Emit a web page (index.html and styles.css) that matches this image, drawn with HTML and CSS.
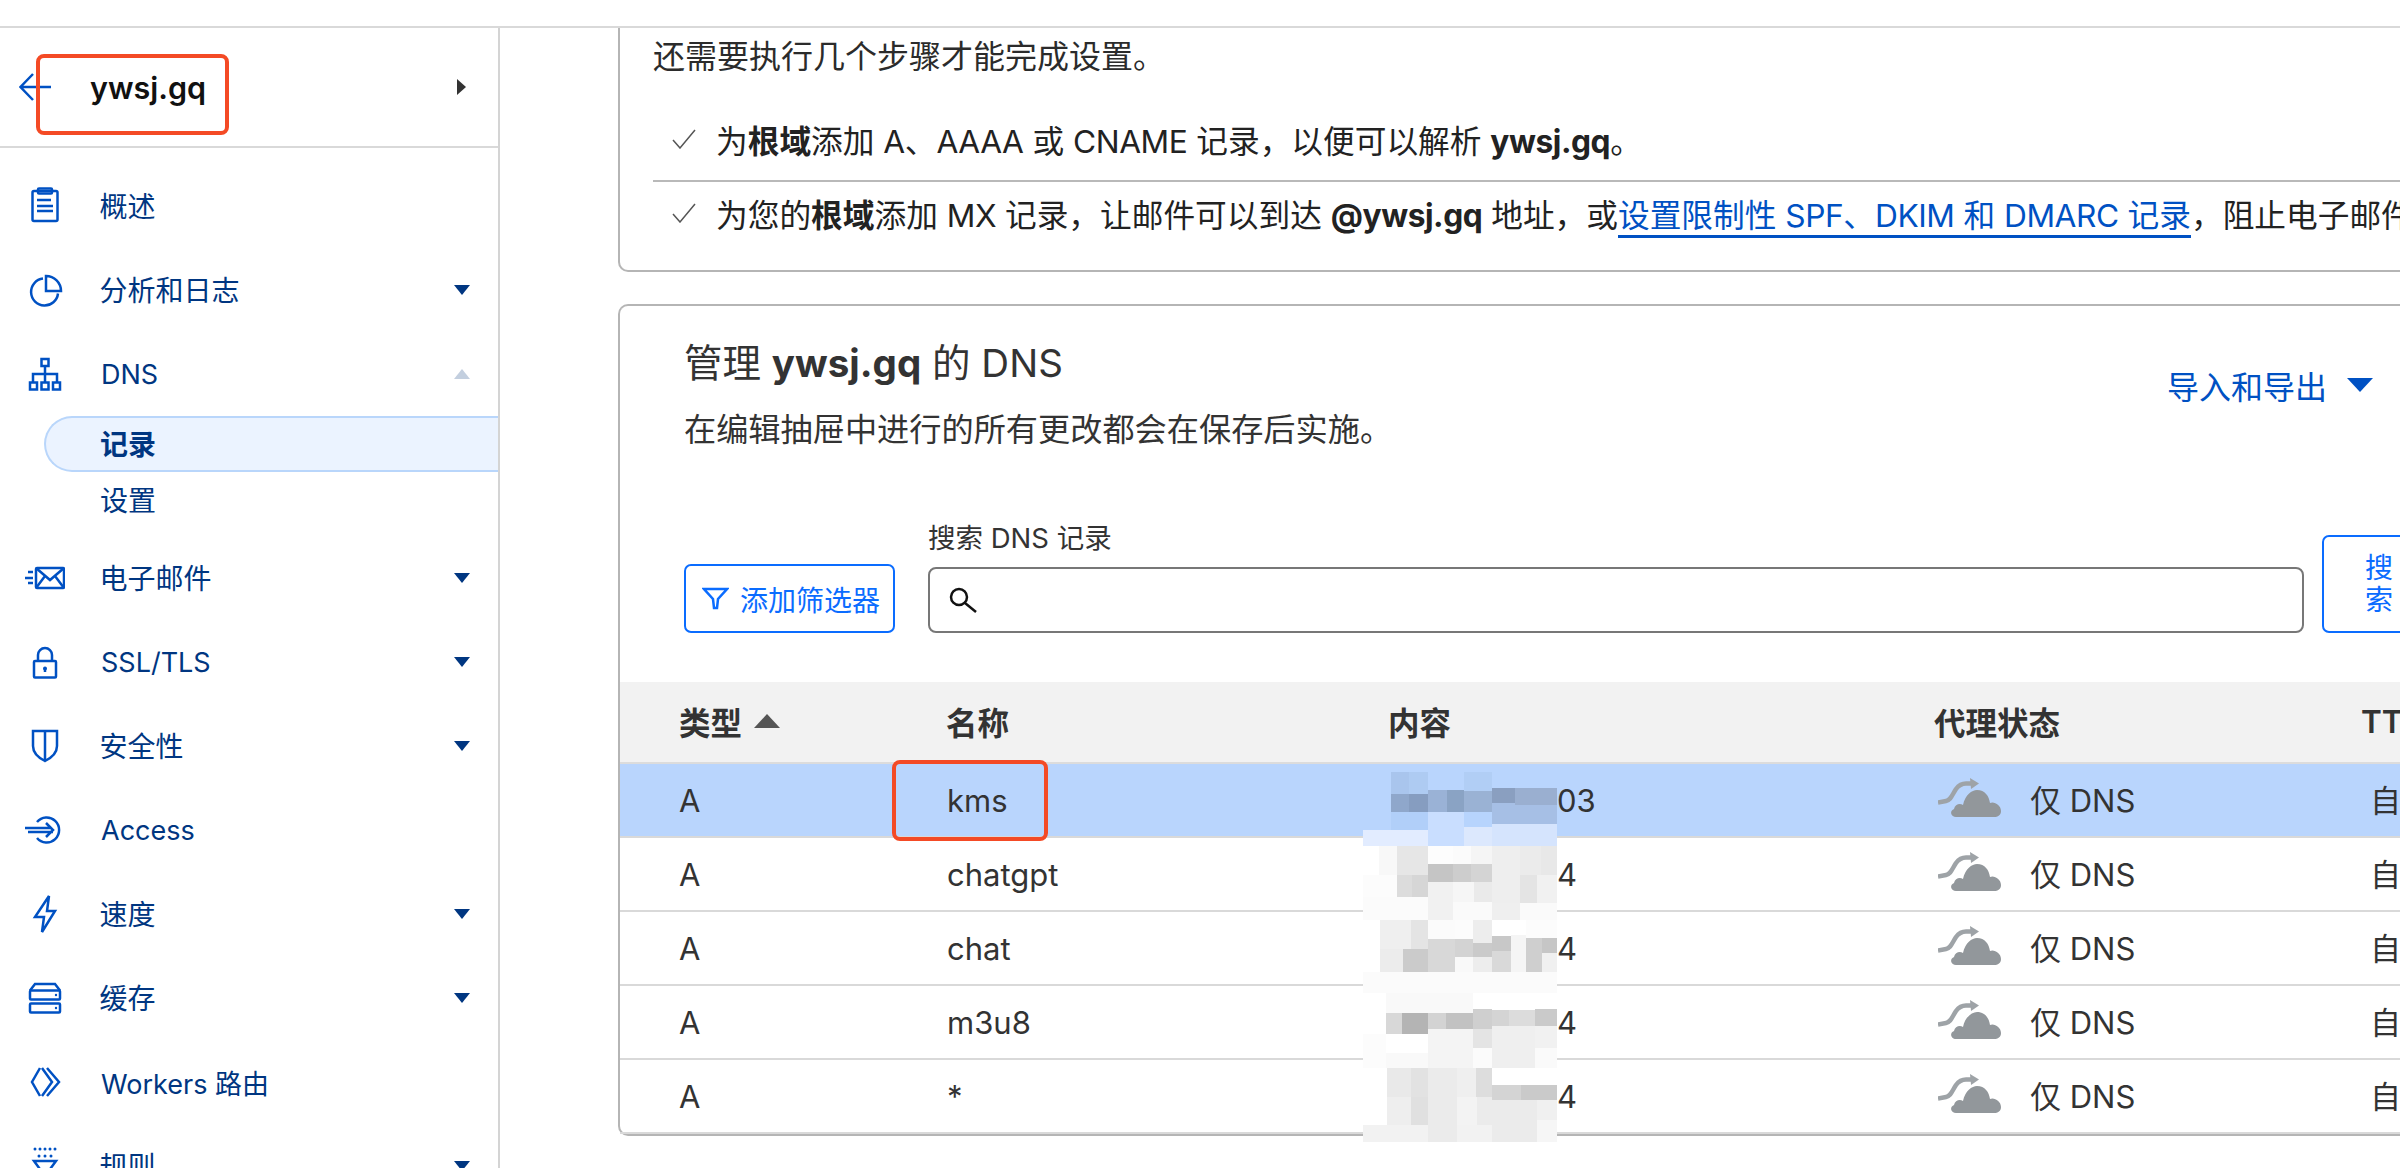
FILE: index.html
```html
<!DOCTYPE html>
<html lang="zh-CN">
<head>
<meta charset="utf-8">
<title>ywsj.gq DNS</title>
<link rel="stylesheet" href="styles.css">
</head>
<body>
<svg class="defs" width="0" height="0" aria-hidden="true">
  <symbol id="cloud" viewBox="0 0 64 40">
    <path class="cloud-arrow" d="M0 24.500 L8 23 C13 22 14 17 18 11 C21 7 24 5.500 28 5.500 H34"/>
    <path class="cloud-head" d="M32 0 L41 5.500 L33 11 Z"/>
    <path class="cloud-body" d="M18 39 C13 39 11 33 16 31 C17 26 22 25 25 27 C27 17 34 12 39 12 C47 12 51 18 52 25 C56 23 63 27 63 33 C63 37 60 39 56 39 Z"/>
  </symbol>
</svg>
<div class="topbar"></div>
<div class="shell">
  <aside class="sidebar">
    <div class="side-head">
      <svg class="back" width="32" height="28" viewBox="0 0 32 28"><path d="M14 1 L1.500 14 L14 27 M1.500 14 H32"/></svg>
      <span class="zone">ywsj.gq</span>
      <i class="tri-right"></i>
      <span class="mark mark-zone"></span>
    </div>
    <nav class="nav">
      <a class="item">
        <svg class="ico" viewBox="0 0 40 40"><rect x="7.500" y="5" width="25" height="30" rx="1.500"/><rect x="13" y="2.500" width="14" height="5" rx="1"/><path d="M12 14 H26 M12 20 H28 M12 25 H28"/></svg>
        <span class="cjk">概述</span>
      </a>
      <a class="item">
        <svg class="ico" viewBox="0 0 40 40"><path d="M21 6 A15 15 0 0 1 36 21 H21 Z"/><path d="M18 8.600 A13.500 13.500 0 1 0 33 23.500"/></svg>
        <span class="cjk">分析和日志</span><i class="caret"></i>
      </a>
      <a class="item">
        <svg class="ico" viewBox="0 0 40 40"><rect x="16.500" y="5" width="7" height="7"/><path d="M20 12 V28 M8 28 V20 H32 V28"/><rect x="5" y="28.500" width="7" height="7"/><rect x="16.500" y="28.500" width="7" height="7"/><rect x="28" y="28.500" width="7" height="7"/></svg>
        <span class="latin">DNS</span><i class="caret caret-up"></i>
      </a>
      <div class="sub">
        <a class="sub-item sub-active">记录</a>
        <a class="sub-item">设置</a>
      </div>
      <a class="item">
        <svg class="ico" viewBox="0 0 40 40"><rect x="11" y="10" width="28" height="20" rx="1"/><path d="M11 10 L25 22 L39 10 M11 30 L20 18 M39 30 L30 18 M3 14 H8 M0 20 H8 M3 25 H8"/></svg>
        <span class="cjk">电子邮件</span><i class="caret"></i>
      </a>
      <a class="item">
        <svg class="ico" viewBox="0 0 40 40"><rect x="9" y="19" width="22" height="16.500" rx="1"/><path d="M13 19 V13 A7 7 0 0 1 27 13 V19 M20 26 V30"/><circle class="dot" cx="20" cy="26.500" r="2"/></svg>
        <span class="latin">SSL/TLS</span><i class="caret"></i>
      </a>
      <a class="item">
        <svg class="ico" viewBox="0 0 40 40"><path d="M8 5 H32 V20 C32 27 26 32 20 35 C14 32 8 27 8 20 Z M20 5 V35"/></svg>
        <span class="cjk">安全性</span><i class="caret"></i>
      </a>
      <a class="item">
        <svg class="ico" viewBox="0 0 40 40"><path d="M12 12 A12.500 12.500 0 1 1 12 28 M0 18 H26 M3 22 H28 M21 13 L28 20 L21 27"/></svg>
        <span class="latin">Access</span>
      </a>
      <a class="item">
        <svg class="ico" viewBox="0 0 40 40"><path d="M24 2 L10 23 H19 L17 38 L30 17 H22 Z"/></svg>
        <span class="cjk">速度</span><i class="caret"></i>
      </a>
      <a class="item">
        <svg class="ico" viewBox="0 0 40 40"><path d="M5 12.500 L10 6 H30 L35 12.500"/><rect x="5" y="12.500" width="30" height="9" rx="1"/><rect x="5" y="25.500" width="30" height="9" rx="1"/><circle class="dot" cx="31" cy="17" r="1.200"/><circle class="dot" cx="31" cy="30" r="1.200"/></svg>
        <span class="cjk">缓存</span><i class="caret"></i>
      </a>
      <a class="item">
        <svg class="ico" viewBox="0 0 40 40"><path d="M15 6 L7 20 L15 34 M17 6 L27 20 L17 34 M22 6 L34 20 L22 34"/></svg>
        <span class="latin">Workers 路由</span>
      </a>
      <a class="item">
        <svg class="ico" viewBox="0 0 40 40"><circle class="dot" cx="10" cy="3" r="1.500"/><circle class="dot" cx="15" cy="3" r="1.500"/><circle class="dot" cx="20" cy="3" r="1.500"/><circle class="dot" cx="25" cy="3" r="1.500"/><circle class="dot" cx="30" cy="3" r="1.500"/><circle class="dot" cx="14" cy="10" r="1.500"/><circle class="dot" cx="20" cy="10" r="1.500"/><circle class="dot" cx="26" cy="10" r="1.500"/><path d="M9 15 H31 L20 30 Z"/></svg>
        <span class="cjk">规则</span><i class="caret"></i>
      </a>
    </nav>
  </aside>

  <main class="main">
    <section class="card card-setup">
      <p class="intro">还需要执行几个步骤才能完成设置。</p>
      <ul class="steps">
        <li class="step">
          <svg class="check" width="24" height="20" viewBox="0 0 24 20"><path d="M1 11 L8 19 L23 1"/></svg>
          <span>为<b>根域</b>添加 <span class="tight">A</span>、<span class="tight">AAAA</span> 或 <span class="tight">CNAME</span> 记录，以便可以解析 <b class="tight">ywsj.gq</b>。</span>
        </li>
        <li class="step step-last">
          <svg class="check" width="24" height="20" viewBox="0 0 24 20"><path d="M1 11 L8 19 L23 1"/></svg>
          <span>为您的<b>根域</b>添加 <span class="tight">MX</span> 记录，让邮件可以到达 <b class="tight">@ywsj.gq</b> 地址，或<a class="link">设置限制性 <span class="tight">SPF</span>、<span class="tight">DKIM</span> 和 <span class="tight">DMARC</span> 记录</a>，阻止电子邮件</span>
        </li>
      </ul>
    </section>

    <section class="card card-dns">
      <div class="dns-head">
        <div>
          <h2 class="title">管理 <b>ywsj.gq</b> 的 DNS</h2>
          <p class="desc">在编辑抽屉中进行的所有更改都会在保存后实施。</p>
        </div>
        <a class="import">导入和导出<i class="tri-down"></i></a>
      </div>

      <div class="search-row">
        <button class="btn btn-filter">
          <svg class="funnel" width="27" height="23" viewBox="0 0 27 23"><path d="M2 2 H25 L16 12 L15 21 H12 L11 12 Z"/></svg>添加筛选器
        </button>
        <div class="field">
          <label class="field-label">搜索 DNS 记录</label>
          <div class="input">
            <svg class="lens" width="28" height="26" viewBox="0 0 28 26"><circle cx="10" cy="10" r="8"/><path d="M16 16 L27 25"/></svg>
          </div>
        </div>
        <button class="btn btn-search">搜索</button>
      </div>

      <div class="records">
        <div class="row row-head">
          <div class="cell-type">类型<i class="tri-sort"></i></div>
          <div>名称</div>
          <div>内容</div>
          <div>代理状态</div>
          <div>TTL</div>
        </div>
        <div class="row row-body row-selected">
          <div class="cell-a">A</div>
          <div class="cell-name">kms</div>
          <div class="cell-value">03</div>
          <div class="cell-proxy"><svg class="cloud" width="64" height="40"><use href="#cloud"/></svg>仅 DNS</div>
          <div class="cell-ttl">自动</div>
        </div>
        <div class="row row-body">
          <div class="cell-a">A</div>
          <div class="cell-name">chatgpt</div>
          <div class="cell-value">4</div>
          <div class="cell-proxy"><svg class="cloud" width="64" height="40"><use href="#cloud"/></svg>仅 DNS</div>
          <div class="cell-ttl">自动</div>
        </div>
        <div class="row row-body">
          <div class="cell-a">A</div>
          <div class="cell-name">chat</div>
          <div class="cell-value">4</div>
          <div class="cell-proxy"><svg class="cloud" width="64" height="40"><use href="#cloud"/></svg>仅 DNS</div>
          <div class="cell-ttl">自动</div>
        </div>
        <div class="row row-body">
          <div class="cell-a">A</div>
          <div class="cell-name">m3u8</div>
          <div class="cell-value">4</div>
          <div class="cell-proxy"><svg class="cloud" width="64" height="40"><use href="#cloud"/></svg>仅 DNS</div>
          <div class="cell-ttl">自动</div>
        </div>
        <div class="row row-body">
          <div class="cell-a">A</div>
          <div class="cell-name">*</div>
          <div class="cell-value">4</div>
          <div class="cell-proxy"><svg class="cloud" width="64" height="40"><use href="#cloud"/></svg>仅 DNS</div>
          <div class="cell-ttl">自动</div>
        </div>

        <span class="mark mark-kms"></span>

        <svg class="mosaic" width="194" height="370" viewBox="189 336 582 1110" shape-rendering="crispEdges">
          <g>
            <rect x="273" y="336" width="54" height="66" fill="#a9c5ed"/>
            <rect x="327" y="336" width="57" height="66" fill="#aecbf2"/>
            <rect x="492" y="336" width="84" height="60" fill="#b1cef5"/>
            <rect x="273" y="402" width="54" height="53" fill="#8fa7cb"/>
            <rect x="327" y="402" width="57" height="53" fill="#869dc0"/>
            <rect x="384" y="390" width="57" height="65" fill="#9ab2d6"/>
            <rect x="441" y="390" width="51" height="65" fill="#8aa3c4"/>
            <rect x="492" y="393" width="84" height="62" fill="#9ab2d4"/>
            <rect x="576" y="384" width="69" height="46" fill="#8a9fc0"/>
            <rect x="645" y="384" width="126" height="51" fill="#9aafd0"/>
            <rect x="576" y="430" width="69" height="62" fill="#a6bfe5"/>
            <rect x="645" y="435" width="126" height="57" fill="#a6bfe5"/>
            <rect x="273" y="455" width="111" height="55" fill="#b1cff9"/>
            <rect x="384" y="455" width="108" height="103" fill="#c9deff"/>
            <rect x="492" y="455" width="84" height="45" fill="#b7d4fd"/>
            <rect x="189" y="510" width="195" height="48" fill="#e2ecff"/>
            <rect x="492" y="500" width="84" height="58" fill="#dce8fd"/>
            <rect x="576" y="492" width="195" height="66" fill="#d5e4fd"/>

            <rect x="189" y="558" width="48" height="87" fill="#ffffff"/>
            <rect x="237" y="558" width="54" height="87" fill="#f8f8f8"/>
            <rect x="291" y="558" width="93" height="87" fill="#e6e6e6"/>
            <rect x="384" y="558" width="75" height="54" fill="#fdfdfd"/>
            <rect x="459" y="558" width="54" height="54" fill="#fbfbfb"/>
            <rect x="513" y="558" width="63" height="54" fill="#f5f5f5"/>
            <rect x="576" y="558" width="84" height="87" fill="#eeeeee"/>
            <rect x="660" y="558" width="63" height="87" fill="#ebebeb"/>
            <rect x="723" y="558" width="48" height="87" fill="#e8e8e8"/>
            <rect x="384" y="612" width="75" height="54" fill="#c5c5c5"/>
            <rect x="459" y="612" width="54" height="54" fill="#cdcdcd"/>
            <rect x="513" y="612" width="63" height="54" fill="#d4d4d4"/>
            <rect x="189" y="645" width="102" height="65" fill="#fcfcfc"/>
            <rect x="291" y="645" width="45" height="65" fill="#dcdcdc"/>
            <rect x="336" y="645" width="48" height="65" fill="#d6d6d6"/>
            <rect x="576" y="645" width="84" height="85" fill="#eeeeee"/>
            <rect x="660" y="645" width="51" height="85" fill="#e4e4e4"/>
            <rect x="711" y="645" width="60" height="85" fill="#f1f1f1"/>
            <rect x="384" y="666" width="75" height="59" fill="#f1f1f1"/>
            <rect x="459" y="666" width="63" height="59" fill="#f6f6f6"/>
            <rect x="522" y="666" width="54" height="59" fill="#eaeaea"/>
            <rect x="189" y="710" width="195" height="70" fill="#fbfbfb"/>
            <rect x="384" y="725" width="75" height="55" fill="#f1f1f1"/>
            <rect x="459" y="725" width="117" height="55" fill="#fafafa"/>
            <rect x="576" y="730" width="84" height="50" fill="#efefef"/>
            <rect x="660" y="730" width="111" height="50" fill="#fafafa"/>

            <rect x="189" y="780" width="51" height="158" fill="#ffffff"/>
            <rect x="240" y="780" width="93" height="87" fill="#efefef"/>
            <rect x="333" y="780" width="51" height="87" fill="#e4e4e4"/>
            <rect x="384" y="780" width="81" height="57" fill="#fbfbfb"/>
            <rect x="465" y="780" width="54" height="57" fill="#fcfcfc"/>
            <rect x="519" y="780" width="57" height="70" fill="#ededed"/>
            <rect x="576" y="780" width="195" height="48" fill="#ffffff"/>
            <rect x="678" y="780" width="93" height="55" fill="#fcfcfc"/>
            <rect x="576" y="828" width="57" height="45" fill="#c8c8c8"/>
            <rect x="633" y="825" width="45" height="110" fill="#f5f5f5"/>
            <rect x="678" y="835" width="48" height="100" fill="#cfcfcf"/>
            <rect x="726" y="835" width="45" height="43" fill="#c6c6c6"/>
            <rect x="384" y="837" width="81" height="101" fill="#d8d8d8"/>
            <rect x="465" y="837" width="54" height="53" fill="#d3d3d3"/>
            <rect x="519" y="850" width="57" height="42" fill="#cacaca"/>
            <rect x="240" y="867" width="69" height="71" fill="#ececec"/>
            <rect x="309" y="867" width="75" height="71" fill="#cbcbcb"/>
          </g>
          <g transform="translate(0 840)">
            <rect x="465" y="50" width="54" height="48" fill="#f9f9f9"/>
            <rect x="519" y="52" width="57" height="46" fill="#ededed"/>
            <rect x="576" y="32" width="57" height="63" fill="#d9d9d9"/>
            <rect x="726" y="38" width="45" height="57" fill="#f0f0f0"/>
            <rect x="189" y="95" width="582" height="65" fill="#fbfbfb"/>

            <rect x="189" y="160" width="582" height="60" fill="#ffffff"/>
            <rect x="258" y="160" width="261" height="60" fill="#f9f9f9"/>
            <rect x="258" y="220" width="48" height="62" fill="#d8d8d8"/>
            <rect x="306" y="220" width="78" height="62" fill="#b4b4b4"/>
            <rect x="384" y="220" width="54" height="46" fill="#d3d3d3"/>
            <rect x="438" y="220" width="81" height="46" fill="#c2c2c2"/>
            <rect x="519" y="208" width="57" height="58" fill="#cfcfcf"/>
            <rect x="576" y="210" width="51" height="48" fill="#d4d4d4"/>
            <rect x="627" y="210" width="78" height="48" fill="#dcdcdc"/>
            <rect x="705" y="208" width="66" height="50" fill="#cacaca"/>
            <rect x="189" y="220" width="69" height="62" fill="#ffffff"/>
            <rect x="576" y="258" width="129" height="126" fill="#efefef"/>
            <rect x="705" y="258" width="66" height="67" fill="#f1f1f1"/>
            <rect x="519" y="266" width="57" height="59" fill="#e4e4e4"/>
            <rect x="384" y="266" width="135" height="118" fill="#f4f4f4"/>
            <rect x="189" y="282" width="69" height="102" fill="#fcfcfc"/>
            <rect x="258" y="282" width="126" height="58" fill="#ffffff"/>
            <rect x="519" y="325" width="57" height="59" fill="#fbfbfb"/>
            <rect x="705" y="325" width="66" height="59" fill="#fafafa"/>
            <rect x="258" y="340" width="126" height="44" fill="#f9f9f9"/>

            <rect x="189" y="384" width="72" height="171" fill="#ffffff"/>
            <rect x="261" y="384" width="72" height="86" fill="#e9e9e9"/>
            <rect x="333" y="384" width="51" height="86" fill="#e2e2e2"/>
            <rect x="384" y="384" width="87" height="222" fill="#ebebeb"/>
            <rect x="471" y="384" width="57" height="86" fill="#efefef"/>
            <rect x="528" y="384" width="48" height="86" fill="#dddddd"/>
            <rect x="576" y="384" width="195" height="51" fill="#ffffff"/>
            <rect x="576" y="435" width="87" height="45" fill="#d4d4d4"/>
            <rect x="663" y="435" width="108" height="45" fill="#cacaca"/>
            <rect x="261" y="470" width="72" height="85" fill="#eeeeee"/>
            <rect x="333" y="470" width="51" height="85" fill="#e0e0e0"/>
            <rect x="471" y="470" width="60" height="85" fill="#f3f3f3"/>
            <rect x="531" y="470" width="45" height="85" fill="#ebebeb"/>
            <rect x="576" y="480" width="135" height="126" fill="#ebebeb"/>
            <rect x="711" y="480" width="60" height="60" fill="#f0f0f0"/>
            <rect x="189" y="555" width="195" height="51" fill="#f2f2f2"/>
            <rect x="471" y="555" width="105" height="51" fill="#f2f2f2"/>
            <rect x="711" y="540" width="60" height="66" fill="#f6f6f6"/>
          </g>
        </svg>
      </div>
    </section>
  </main>
</div>
</body>
</html>
```

FILE: styles.css
```css
* {
  box-sizing: border-box;
}

html,
body {
  margin: 0;
  height: 1168px;
  overflow: hidden;
  background: #fff;
}

body {
  font-family: Inter, "Noto Sans CJK SC", sans-serif;
  color: #313131;
  display: flex;
  flex-direction: column;
}

.defs {
  position: absolute;
}

p,
h2,
ul {
  margin: 0;
  padding: 0;
}

ul {
  list-style: none;
}

i {
  display: block;
}

.topbar {
  height: 28px;
  flex: none;
  border-bottom: 2px solid #d9d9d9;
}

.shell {
  flex: 1;
  display: flex;
  min-height: 0;
}

/* Sidebar */
.sidebar {
  width: 500px;
  flex: none;
  border-right: 2px solid #d4d4d4;
}

.side-head {
  position: relative;
  height: 120px;
  display: flex;
  align-items: center;
  padding-left: 19px;
  border-bottom: 2px solid #d9d9d9;
}

.back {
  flex: none;
  fill: none;
  stroke: #0051c3;
  stroke-width: 2.500;
}

.zone {
  margin-left: 39px;
  font-size: 30.500px;
  font-weight: 600;
  color: #111;
}

.tri-right {
  margin-left: auto;
  margin-right: 32px;
  border-left: 9px solid #333;
  border-top: 8px solid transparent;
  border-bottom: 8px solid transparent;
}

.mark {
  position: absolute;
  border: 4px solid #f44a25;
  border-radius: 8px;
}

.mark-zone {
  left: 36px;
  top: 26px;
  width: 193px;
  height: 81px;
}

.nav {
  padding-top: 16px;
}

.item {
  height: 84px;
  display: flex;
  align-items: center;
  padding-left: 25px;
  color: #003681;
}

.cjk {
  font-size: 28px;
  margin-left: -1.500px;
  padding-bottom: 3px;
}

.latin {
  font-size: 27px;
}

.ico {
  width: 40px;
  height: 40px;
  flex: none;
  margin-right: 36px;
  fill: none;
  stroke: #0051c3;
  stroke-width: 2.500;
}

.ico .dot {
  fill: #0051c3;
  stroke: none;
}

.caret {
  margin-left: auto;
  margin-right: 28px;
  border-left: 8px solid transparent;
  border-right: 8px solid transparent;
  border-top: 10px solid #003681;
}

.caret-up {
  border-top: 0;
  border-bottom: 10px solid #c3cfdf;
}

.sub {
  margin-bottom: 8px;
}

.sub-item {
  height: 56px;
  display: flex;
  align-items: center;
  margin-left: 44px;
  padding-left: 56px;
  padding-bottom: 3px;
  font-size: 28px;
  color: #003681;
}

.sub-active {
  font-weight: 600;
  background: #ebf3ff;
  border: 2px solid #b9d6fb;
  border-right: 0;
  border-radius: 28px 0 0 28px;
  padding-left: 54px;
}

/* Main */
.main {
  flex: 1;
  min-width: 0;
  padding-left: 118px;
  overflow: hidden;
}

.card {
  width: 1900px;
  border: 2px solid #b5b5b5;
  border-right: 0;
  background: #fff;
}

.card-setup {
  border-top: 0;
  border-radius: 0 0 0 10px;
  padding: 0 0 22px 33px;
}

.intro {
  height: 58px;
  line-height: 58px;
  font-size: 32px;
  color: #2b2b2b;
}

.steps {
  margin-top: 16px;
}

.step {
  height: 80px;
  display: flex;
  align-items: center;
  white-space: nowrap;
  padding-left: 19px;
  padding-bottom: 4px;
  border-bottom: 2px solid #b9b9b9;
  color: #222;
  font-size: 31.700px;
}

.step-last {
  height: 66px;
  padding-bottom: 5px;
  border-bottom: 0;
}

.step b {
  font-weight: 700;
}

.tight {
  letter-spacing: -0.450px;
}

.check {
  flex: none;
  margin-right: 20px;
  fill: none;
  stroke: #555;
  stroke-width: 1.500;
}

.link {
  color: #0051c3;
  border-bottom: 3px solid #0051c3;
}

.card-dns {
  margin-top: 32px;
  border-radius: 10px 0 0 10px;
  padding-top: 32px;
}

.dns-head {
  display: flex;
  justify-content: space-between;
  width: 1689px;
  margin-left: 64px;
}

.title {
  font-size: 38.500px;
  font-weight: 400;
  line-height: 50px;
  color: #333;
}

.title b {
  font-weight: 700;
}

.desc {
  margin-top: 20px;
  font-size: 32.200px;
  line-height: 44px;
  color: #333;
}

.import {
  display: flex;
  align-items: center;
  height: 44px;
  margin-top: 25px;
  font-size: 32px;
  color: #0051c3;
}

.tri-down {
  margin-left: 20px;
  border-left: 13px solid transparent;
  border-right: 13px solid transparent;
  border-top: 14px solid #0051c3;
}

.search-row {
  display: flex;
  align-items: flex-end;
  margin: 68px 0 49px 64px;
}

.btn {
  font: inherit;
  background: #fff;
  border: 2.500px solid #0a6cff;
  border-radius: 7px;
  color: #0a6cff;
  font-size: 28px;
  flex: none;
}

.btn-filter {
  width: 211px;
  height: 69px;
  display: flex;
  align-items: center;
  padding: 0 0 0 16px;
}

.funnel {
  flex: none;
  margin-right: 11px;
  fill: none;
  stroke: #0a6cff;
  stroke-width: 2.500;
}

.field {
  width: 1376px;
  margin: 0 18px 0 33px;
}

.field-label {
  display: block;
  height: 34px;
  line-height: 37px;
  margin-bottom: 13px;
  font-size: 27.500px;
  color: #333;
}

.input {
  height: 66px;
  border: 2.500px solid #777;
  border-radius: 8px;
  display: flex;
  align-items: center;
  padding-left: 19px;
}

.lens {
  fill: none;
  stroke: #111;
  stroke-width: 2.500;
}

.btn-search {
  width: 114px;
  height: 98px;
  padding: 0 41px;
  line-height: 32px;
}

/* Records */
.records {
  position: relative;
}

.row {
  display: grid;
  grid-template-columns: 326px 442px 546px 427px 300px;
  align-items: center;
  font-size: 31px;
  color: #333;
}

.row-head {
  height: 82px;
  padding-bottom: 2px;
  background: #f2f2f2;
  border-bottom: 2px solid #dcdcdc;
  font-size: 31.500px;
  font-weight: 600;
}

.row > div:first-child {
  padding-left: 59px;
}

.cell-type {
  display: flex;
  align-items: center;
}

.tri-sort {
  margin-left: 12px;
  border-left: 13px solid transparent;
  border-right: 13px solid transparent;
  border-bottom: 14px solid #555;
}

.row-body {
  height: 74px;
  border-bottom: 2px solid #d9d9d9;
  line-height: 74px;
}

.row-selected {
  background: #b9d5fd;
}

.row > .cell-a {
  padding-left: 64px;
}

.cell-name {
  padding-left: 1px;
}

.cell-value {
  padding-left: 169px;
}

.cell-proxy {
  display: flex;
  align-items: center;
  padding-left: 4px;
  height: 74px;
}

.cloud {
  flex: none;
  margin: -6px 28px 0 0;
}

.cloud-arrow {
  fill: none;
  stroke: #9ea3a7;
  stroke-width: 4.500;
}

.cloud-head {
  fill: #9ea3a7;
}

.cloud-body {
  fill: #92979b;
}

.cell-ttl {
  padding-left: 9px;
}

.mark-kms {
  left: 272px;
  top: 78px;
  width: 156px;
  height: 81px;
}

.mosaic {
  position: absolute;
  left: 743px;
  top: 90px;
}
```
